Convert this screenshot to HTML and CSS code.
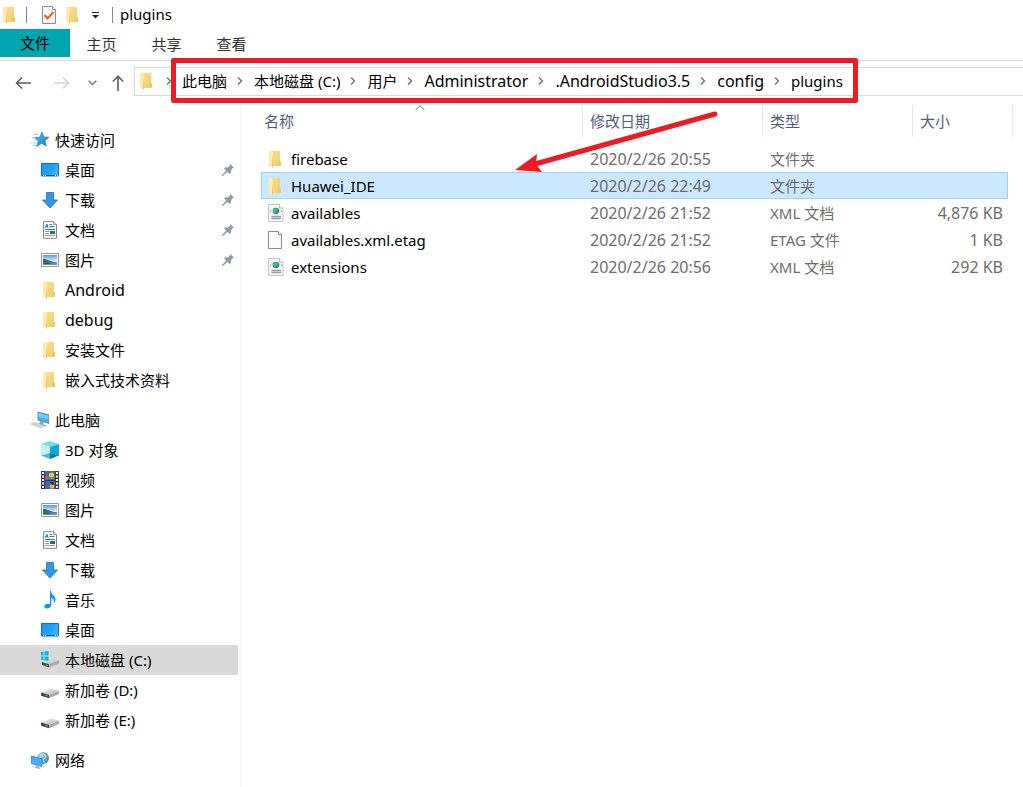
FILE: index.html
```html
<!DOCTYPE html>
<html lang="zh-CN">
<head>
<meta charset="utf-8">
<title>plugins</title>
<link rel="stylesheet" href="styles.css">
</head>
<body>
<svg class="sprite" aria-hidden="true">
  <defs>
    <linearGradient id="gFolder" x1="0" y1="0" x2="1" y2="1"><stop offset="0" stop-color="#fbe08e"/><stop offset="1" stop-color="#f0cb66"/></linearGradient>
    <linearGradient id="gBlue" x1="0" y1="0" x2="1" y2="1"><stop offset="0" stop-color="#1497f5"/><stop offset=".5" stop-color="#1ea2fd"/><stop offset="1" stop-color="#2fb0ff"/></linearGradient>
    <linearGradient id="gSky" x1="0" y1="0" x2="0" y2="1"><stop offset="0" stop-color="#5b97e4"/><stop offset=".6" stop-color="#d9effa"/><stop offset="1" stop-color="#b4d3e3"/></linearGradient>
    <linearGradient id="gStar" x1="0" y1="0" x2="1" y2="1"><stop offset="0" stop-color="#4cc3f7"/><stop offset="1" stop-color="#1779d6"/></linearGradient>
    <linearGradient id="gDrive" x1="0" y1="0" x2="1" y2="1"><stop offset="0" stop-color="#eceef0"/><stop offset="1" stop-color="#b9bcc0"/></linearGradient>
    <radialGradient id="gGlobe" cx=".35" cy=".3" r=".8"><stop offset="0" stop-color="#a9dcf1"/><stop offset="1" stop-color="#2b7ba9"/></radialGradient>
  </defs>
  <symbol id="folder" viewBox="0 0 18 18">
    <path d="M5 1h8v10l1 1v4H5z" fill="url(#gFolder)"/>
    <path d="M2 1h3l1 2v14.500L2 16z" fill="#fdeab0"/>
    <path d="M6 3v14l-1 .7V15z" fill="#edc35a"/>
    <path d="M11.500 11.500h2.500V16h-2.500z" fill="#f0c863"/>
  </symbol>
  <symbol id="star" viewBox="0 0 18 18">
    <path d="M11 1l1.900 5.100 5.100.2-4.100 3.400 1.400 5.400-4.600-2.800-5.100 3.200 1.700-5.500L3.500 6.500l5.200-.2z" fill="url(#gStar)" stroke="#1c80c9" stroke-width=".7"/>
    <path d="M2 3.500h5M1 6.500h3M2 9h3M0 12h5M2 14.500h3" stroke="#8ecbf4" stroke-width=".9"/>
  </symbol>
  <symbol id="desktop" viewBox="0 0 18 18">
    <path d="M.5 2.500h17v12.500H.5z" fill="url(#gBlue)" stroke="#0b72bd"/>
    <path d="M10 14l5-11h2v11z" fill="#54bcff" opacity=".35"/>
    <path d="M1 14.500h16" stroke="#075b9b"/><path d="M2 14.500h1M4 14.500h1M14 14.500h1M16 14.500h1" stroke="#fff"/>
  </symbol>
  <symbol id="download" viewBox="0 0 18 18">
    <path d="M5.500 1.500h7v7.500h4L9 17 1.500 9h4z" fill="#3795e5" stroke="#2578c1" stroke-width=".9"/>
  </symbol>
  <symbol id="document" viewBox="0 0 18 18">
    <path d="M2.500.7h10l3 3v13.600h-13z" fill="#fff" stroke="#858585"/>
    <path d="M12.500.7v3h3" fill="#ddd" stroke="#858585" stroke-width=".8"/>
    <path d="M4 7l2-4 1 4M4.700 5.500h2" fill="none" stroke="#1b86c9"/>
    <path d="M8.500 3.500H11M8.500 5.500h5M4 8.500h10" stroke="#1b86c9"/>
    <path d="M4 10.500h4M4 12.500h4M4 14.500h10" stroke="#999"/>
    <path d="M9 10h5v3H9z" fill="#1f7099"/><path d="M9 12h5v1H9z" fill="#3c6544"/>
  </symbol>
  <symbol id="picture" viewBox="0 0 18 18">
    <path d="M.5 2.500h17v13H.5z" fill="#fff" stroke="#989898"/>
    <path d="M2 4h14v10H2z" fill="url(#gSky)"/>
    <path d="M2 8c3-.5 5 2 14 3.500V12H2z" fill="#396c59"/><path d="M2 11.500h14V14H2z" fill="#5799b3"/>
    <path d="M2 11.500c5 0 7 .7 9 1.500H2z" fill="#2f5b60"/>
  </symbol>
  <symbol id="computer" viewBox="0 0 18 18">
    <path d="M7 1l11 3v8.500L7 9z" fill="#45b2f7" stroke="#4d7c9e" stroke-width=".8"/>
    <path d="M7.500 2l10 3v3l-10-2z" fill="#78ccff"/>
    <path d="M9 9.700l4 1.300-1 2.300 4 1.200-2 1-6-2z" fill="#97a5ad"/>
    <path d="M0 13l4-1.500 9 3-3 2.300z" fill="#dfe3e6" stroke="#aab1b6" stroke-width=".6"/>
    <path d="M3 12.500l8 2.500M1.500 13l8 2.700" stroke="#b6bdc2" stroke-width=".5"/>
  </symbol>
  <symbol id="cube" viewBox="0 0 18 18">
    <path d="M9 0l9 3-9 3-9-3z" fill="#76dce8"/><path d="M0 3l9 3v6L0 14.500z" fill="#c6f1f3"/>
    <path d="M18 3L9 6v6l9 2.500z" fill="#12a8dc"/><path d="M0 14.500L9 12v6z" fill="#39bfd0"/>
    <path d="M18 14.500L9 12v6z" fill="#087c9b"/>
  </symbol>
  <symbol id="video" viewBox="0 0 18 18">
    <path d="M0 0h18v18H0z" fill="#3d3d3d"/><path d="M4 0h10v9H4zM4 10h10v8H4z" fill="#3867c4"/>
    <path d="M2 1v17M16 1v17" stroke="#eee" stroke-width="2" stroke-dasharray="2 1.500"/>
    <circle cx="10.500" cy="4" r="2.600" fill="#f5c62d"/><circle cx="6" cy="6.500" r="2" fill="#dc4859"/>
    <path d="M8 6h5v2H8z" fill="#55a942"/><circle cx="11" cy="15.500" r="2.300" fill="#efb52b"/>
    <path d="M9 11h3l1 2-2 1z" fill="#362b31"/>
  </symbol>
  <symbol id="music" viewBox="0 0 18 18">
    <path d="M9 0h1c0 3.500 4.500 4.500 4.500 8.500 0 1.500-.7 3-1.800 4 .8-3-.4-5-2.400-5.600V14c0 4-7 4.500-7 1.500 0-2 3-3.400 5.700-2.200z" fill="#1198ee"/>
  </symbol>
  <symbol id="drive" viewBox="0 0 18 18">
    <path d="M0 11.500L10 7.500l8 2.200-10 4z" fill="url(#gDrive)"/>
    <path d="M0 11.500l8 2.200v3.500l-8-2.500z" fill="#414744"/><path d="M8 13.700l10-4V13L8 17.200z" fill="#a8abae"/>
    <path d="M4.500 14.400l2 .6" stroke="#45d05d" stroke-width="1.200"/>
  </symbol>
  <symbol id="system" viewBox="0 0 18 18">
    <path d="M0 11L10 7l8 2.200-10 4z" fill="url(#gDrive)"/>
    <path d="M1 11l7 2.200v3.300l-7-2.500z" fill="#414744"/><path d="M8 13.200l10-4v3.300L8 16.500z" fill="#a8abae"/>
    <path d="M5 14l2 .6" stroke="#45d05d" stroke-width="1.200"/>
    <path d="M-1 1.200L2.500.7V4.500H-1zM3.500.5L7.500 0v4.500h-4zM-1 5.500h3.500v3.700L-1 8.700zM3.500 5.500h4V10l-4-.6z" fill="#0bb7f0"/>
  </symbol>
  <symbol id="network" viewBox="0 0 18 18">
    <circle cx="12" cy="7" r="6" fill="url(#gGlobe)"/><path d="M8 3c2 0 3 1 5 0l2 3-3 3 2 3M6 8l4-2" fill="none" stroke="#ccecf7" stroke-width="1.200" opacity=".7"/>
    <path d="M.5 5l10.500 3v7.500l-10.500-3z" fill="#43b0f5" stroke="#2c80ba" stroke-width=".8"/>
    <path d="M5 14l3 .8v1.400l2 .8-2 1-5-1.500 2-1z" fill="#a9b3b9"/>
  </symbol>
  <symbol id="pin" viewBox="0 0 12 12">
    <path d="M8.300 0L12 3.700 10.500 4.200 9 6.200v2.600L7.600 10 5.400 7.800.9 12H0v-.9l4.200-4.500L2 4.400l1.400-1.200 2.600.2L8 1.600z" fill="#8f9ba4"/>
  </symbol>
  <symbol id="xml" viewBox="0 0 18 18">
    <path d="M1.500.5h11l3.500 3.500v13.500H1.500z" fill="#f7f7f7" stroke="#c4c4c4"/>
    <path d="M12.500.5V4H16" fill="#fff" stroke="#a8a8a8" stroke-width=".8"/>
    <circle cx="9" cy="7" r="3.300" fill="#2279c4"/><path d="M8 4l3 1-1 2.500-2 .5 1 2-2-1-1-2.500zM11 7l1 1-2 2z" fill="#4cc354"/>
    <path d="M4.500 6L3.200 7.200l1.300 1.200M13.500 6l1.300 1.200-1.300 1.200" fill="none" stroke="#8b9299" stroke-width=".8"/>
    <path d="M4.500 12.500h9.500M4.500 14.500h9.500" stroke="#99a" stroke-width="1.400"/>
  </symbol>
  <symbol id="blank" viewBox="0 0 18 18">
    <path d="M1.500.5h10l3 3v14h-13z" fill="#fafafa" stroke="#8c8c8c"/><path d="M11.500.5v3h3" fill="#fff" stroke="#8c8c8c"/>
  </symbol>
  <symbol id="properties" viewBox="0 0 18 18">
    <path d="M2.500.5h10l3 3v14h-13z" fill="#f5f6f8" stroke="#8c8c8c"/><path d="M12.500.5v3h3" fill="#fff" stroke="#8c8c8c"/>
    <path d="M4.500 9l3 3.500L13.500 6" fill="none" stroke="#f05a1c" stroke-width="2"/>
  </symbol>
  <symbol id="chevron" viewBox="0 0 6 8"><path d="M1 .5L4.500 4 1 7.500" fill="none" stroke="#777" stroke-width="1.500"/></symbol>
</svg>

<div class="window">
  <header class="titlebar">
    <svg class="icon"><use href="#folder"/></svg>
    <span class="divider"></span>
    <button class="quick" aria-label="属性"><svg class="icon"><use href="#properties"/></svg></button>
    <button class="quick" aria-label="新建文件夹"><svg class="icon"><use href="#folder"/></svg></button>
    <button class="quick quick-menu" aria-label="自定义快速访问工具栏"><svg width="7" height="7" viewBox="0 0 7 7"><path d="M0 .5h7" stroke="#222"/><path d="M0 3h7L3.500 6.500z" fill="#222"/></svg></button>
    <span class="divider"></span>
    <h1 class="title">plugins</h1>
  </header>

  <nav class="ribbon">
    <button class="tab tab-file">文件</button>
    <button class="tab">主页</button>
    <button class="tab">共享</button>
    <button class="tab">查看</button>
  </nav>

  <div class="toolbar">
    <div class="history">
      <button aria-label="后退"><svg width="16" height="14" viewBox="0 0 16 14"><path d="M7 1.500L1.500 7 7 12.500M1.500 7H16" fill="none" stroke="#5f5f5f" stroke-width="1.600"/></svg></button>
      <button aria-label="前进" disabled><svg width="16" height="14" viewBox="0 0 16 14"><path d="M9 1.500L14.500 7 9 12.500M14.500 7H0" fill="none" stroke="#d4d4d4" stroke-width="1.600"/></svg></button>
      <button class="recent" aria-label="最近位置"><svg width="9" height="6" viewBox="0 0 9 6"><path d="M.7.8l3.800 3.700L8.300.8" fill="none" stroke="#777" stroke-width="1.600"/></svg></button>
      <button class="up" aria-label="向上"><svg width="12" height="16" viewBox="0 0 12 16"><path d="M.8 6.500L6 1.300l5.200 5.200M6 1.500V16" fill="none" stroke="#666" stroke-width="1.700"/></svg></button>
    </div>
    <div class="address">
      <svg class="icon"><use href="#folder"/></svg>
      <svg class="chevron"><use href="#chevron"/></svg>
      <nav class="crumbs" aria-label="路径">
        <a href="#">此电脑</a><svg class="chevron"><use href="#chevron"/></svg>
        <a href="#">本地磁盘 (C:)</a><svg class="chevron"><use href="#chevron"/></svg>
        <a href="#">用户</a><svg class="chevron"><use href="#chevron"/></svg>
        <a class="latin" href="#">Administrator</a><svg class="chevron"><use href="#chevron"/></svg>
        <a class="latin" href="#">.AndroidStudio3.5</a><svg class="chevron"><use href="#chevron"/></svg>
        <a class="latin" href="#">config</a><svg class="chevron"><use href="#chevron"/></svg>
        <a href="#">plugins</a>
      </nav>
    </div>
  </div>

  <div class="body">
    <nav class="sidebar">
      <section class="group">
        <a class="node root" href="#"><svg class="icon"><use href="#star"/></svg>快速访问</a>
        <a class="node" href="#"><svg class="icon"><use href="#desktop"/></svg>桌面<svg class="pin"><use href="#pin"/></svg></a>
        <a class="node" href="#"><svg class="icon"><use href="#download"/></svg>下载<svg class="pin"><use href="#pin"/></svg></a>
        <a class="node" href="#"><svg class="icon"><use href="#document"/></svg>文档<svg class="pin"><use href="#pin"/></svg></a>
        <a class="node" href="#"><svg class="icon"><use href="#picture"/></svg>图片<svg class="pin"><use href="#pin"/></svg></a>
        <a class="node" href="#"><svg class="icon"><use href="#folder"/></svg><span class="latin">Android</span></a>
        <a class="node" href="#"><svg class="icon"><use href="#folder"/></svg><span class="latin">debug</span></a>
        <a class="node" href="#"><svg class="icon"><use href="#folder"/></svg>安装文件</a>
        <a class="node" href="#"><svg class="icon"><use href="#folder"/></svg>嵌入式技术资料</a>
      </section>
      <section class="group">
        <a class="node root" href="#"><svg class="icon"><use href="#computer"/></svg>此电脑</a>
        <a class="node" href="#"><svg class="icon"><use href="#cube"/></svg>3D 对象</a>
        <a class="node" href="#"><svg class="icon"><use href="#video"/></svg>视频</a>
        <a class="node" href="#"><svg class="icon"><use href="#picture"/></svg>图片</a>
        <a class="node" href="#"><svg class="icon"><use href="#document"/></svg>文档</a>
        <a class="node" href="#"><svg class="icon"><use href="#download"/></svg>下载</a>
        <a class="node" href="#"><svg class="icon"><use href="#music"/></svg>音乐</a>
        <a class="node" href="#"><svg class="icon"><use href="#desktop"/></svg>桌面</a>
        <a class="node current" href="#"><svg class="icon"><use href="#system"/></svg>本地磁盘 (C:)</a>
        <a class="node" href="#"><svg class="icon"><use href="#drive"/></svg>新加卷 (D:)</a>
        <a class="node" href="#"><svg class="icon"><use href="#drive"/></svg>新加卷 (E:)</a>
      </section>
      <section class="group">
        <a class="node root" href="#"><svg class="icon"><use href="#network"/></svg>网络</a>
      </section>
    </nav>

    <main class="content">
      <table class="files">
        <colgroup><col><col class="col-date"><col class="col-type"><col class="col-size"></colgroup>
        <thead>
          <tr>
            <th class="sorted" scope="col">名称<svg class="sort" viewBox="0 0 10 6"><path d="M.5 5L5 .8 9.500 5" fill="none" stroke="#666"/></svg></th>
            <th scope="col">修改日期</th><th scope="col">类型</th><th scope="col">大小</th>
          </tr>
        </thead>
        <tbody>
          <tr><td><span class="file"><svg class="icon"><use href="#folder"/></svg>firebase</span></td><td class="latin">2020/2/26 20:55</td><td>文件夹</td><td></td></tr>
          <tr class="selected"><td><span class="file"><svg class="icon"><use href="#folder"/></svg>Huawei_IDE</span></td><td class="latin">2020/2/26 22:49</td><td>文件夹</td><td></td></tr>
          <tr><td><span class="file"><svg class="icon"><use href="#xml"/></svg>availables</span></td><td class="latin">2020/2/26 21:52</td><td>XML 文档</td><td class="latin">4,876 KB</td></tr>
          <tr><td><span class="file"><svg class="icon"><use href="#blank"/></svg>availables.xml.etag</span></td><td class="latin">2020/2/26 21:52</td><td>ETAG 文件</td><td class="latin">1 KB</td></tr>
          <tr><td><span class="file"><svg class="icon"><use href="#xml"/></svg>extensions</span></td><td class="latin">2020/2/26 20:56</td><td>XML 文档</td><td class="latin">292 KB</td></tr>
        </tbody>
      </table>
      <svg class="arrow" viewBox="0 0 206 66" aria-hidden="true">
        <path d="M200 5L20 55" stroke="#ed1c24" stroke-width="5" stroke-linecap="round"/>
        <path d="M0 61l22-16-1 10 6 8z" fill="#ed1c24"/>
      </svg>
    </main>
  </div>
</div>
</body>
</html>
```
FILE: styles.css
```css
* { box-sizing: border-box; }

body {
  margin: 0;
  background: #fff;
  color: #000;
  font: 15px/20px "Noto Sans", "Noto Sans CJK SC", sans-serif;
}

a { color: inherit; text-decoration: none; }

button {
  margin: 0;
  padding: 0;
  border: 0;
  background: none;
  color: inherit;
  font: inherit;
}

svg { display: block; flex: none; }
.sprite { position: absolute; width: 0; height: 0; }
.icon { width: 18px; height: 18px; overflow: visible; }
.latin { font-size: 16px; }

.window {
  display: flex;
  flex-direction: column;
  min-height: 100vh;
}

/* Title bar */
.titlebar {
  display: flex;
  align-items: center;
  height: 29px;
  padding-left: 1px;
}
.divider { width: 1px; height: 16px; background: #888; }
.titlebar .divider { margin: 0 7px; }
.titlebar .quick { margin-left: 6px; }
.titlebar .quick-menu { margin-left: 9px; padding: 2px 6px 0 1px; }
.title { margin: 0; padding-bottom: 2px; font-size: 15px; font-weight: 400; }

/* Ribbon tabs */
.ribbon {
  display: flex;
  padding-bottom: 3px;
  border-bottom: 1px solid #dadbdc;
}
.tab { width: 65px; height: 28px; padding: 2px 2px 0 0; color: #333; }
.tab-file { width: 70px; background: #00a5ae; color: #000; padding: 0; }

/* Navigation and address bar */
.toolbar { display: flex; align-items: center; padding-top: 6px; }
.history {
  display: flex;
  align-items: center;
  width: 134px;
  padding: 2px 0 0 15px;
}
.history button { margin-right: 23px; }
.history .recent { margin: 0 15px 0 -5px; }
.history .up { margin: 0; }
.address {
  display: flex;
  flex: 1;
  align-items: center;
  height: 29px;
  border: 1px solid #d9d9d9;
  border-right: 0;
  padding: 0 0 2px 3px;
}
.chevron { width: 6px; height: 8px; }
.address > .chevron { margin: 0 0 0 10px; }
.crumbs {
  position: relative;
  display: flex;
  align-items: center;
  height: 20px;
  margin-left: -1px;
  padding-left: 11px;
  white-space: nowrap;
}
.crumbs .chevron { margin: 0 11px 0 10px; }
.crumbs::after {
  content: "";
  position: absolute;
  inset: -13px -15px -12px 0;
  border: 5px solid #ed1c24;
  border-radius: 2px;
}

/* Navigation pane */
.body { display: flex; flex: 1; padding-top: 9px; }
.sidebar {
  flex: none;
  width: 241px;
  padding: 20px 2px 0 0;
  border-right: 1px solid #f3f3f3;
}
.group { margin-bottom: 10px; }
.node {
  display: flex;
  align-items: center;
  gap: 6px;
  height: 30px;
  padding: 0 4px 0 41px;
}
.root { padding-left: 31px; }
.current { background: #d9d9d9; }
.pin { width: 12px; height: 12px; margin-left: auto; }

/* File list */
.content { position: relative; flex: 1; padding: 0 15px 0 20px; }
.files { width: 100%; table-layout: fixed; border-collapse: collapse; }
.col-date { width: 180px; }
.col-type { width: 150px; }
.col-size { width: 96px; }
.files th {
  position: relative;
  height: 32px;
  padding: 0 8px;
  color: #4c607a;
  font-weight: 400;
  text-align: left;
}
.files th:first-child { padding-left: 3px; }
.files th::after {
  content: "";
  position: absolute;
  top: 0;
  right: -1px;
  width: 1px;
  height: 100%;
  background: #e5e5e5;
}
.files th:last-child::after { right: -5px; }
.sort { position: absolute; top: 0; left: 50%; width: 10px; height: 6px; margin-left: -7px; }
.files tbody::before { content: ""; display: block; height: 8px; }
.files td { height: 27px; padding: 0 8px; color: #6d6d6d; white-space: nowrap; }
.files td:first-child { padding-left: 6px; color: #000; }
.files td:last-child { padding-right: 5px; text-align: right; }
.file { display: flex; align-items: center; gap: 6px; }
.selected { background: #cce8ff; outline: 1px solid #99d1ff; outline-offset: -1px; }

/* Callout arrow over the list */
.arrow { position: absolute; top: 4px; left: 274px; width: 206px; height: 66px; fill: none; }
```
